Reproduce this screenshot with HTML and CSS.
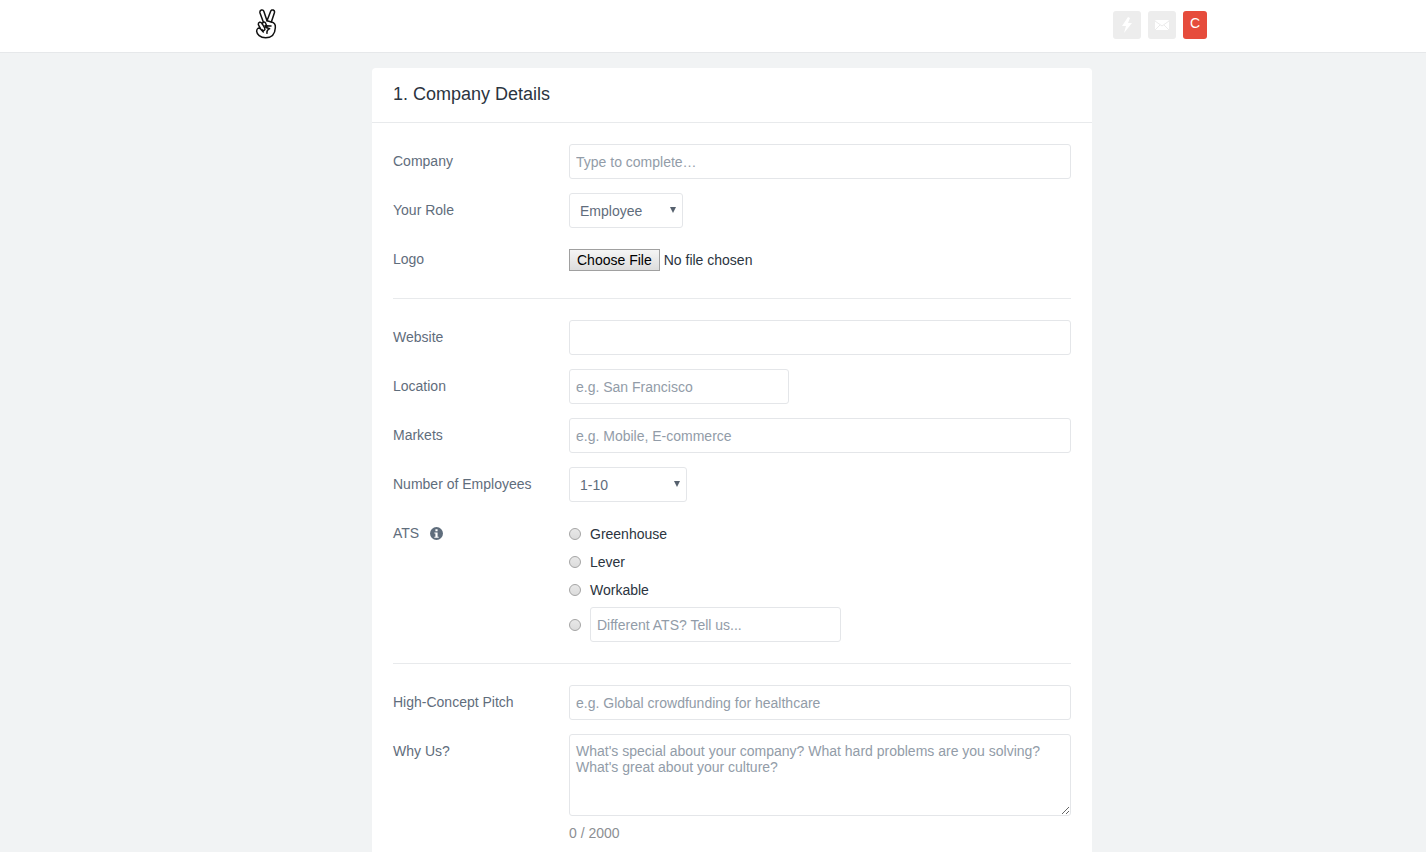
FILE: index.html
```html
<!DOCTYPE html>
<html lang="en">
<head>
<meta charset="utf-8">
<title>Company Details</title>
<link rel="stylesheet" href="styles.css">
</head>
<body>
<header class="topbar">
  <div class="topbar-inner">
    <a class="logo" href="#" aria-label="Home">
      <svg width="22" height="30" viewBox="28 22 66 90" fill="none" stroke="#111" stroke-width="4.5" stroke-linecap="round" stroke-linejoin="round">
        <path d="M53 61 43 34C41 25 52 21 55 30L64 57 75 29C78 21 89 25 86 34L77 61"/>
        <path d="M64 57 77 61C87 63 90 69 89 78C88 98 78 108 60 108C43 108 34 98 33 89C33 81 38 77 44 81L53 91"/>
        <path d="M44 80 38 69C37 61 45 59 49 65L57 79C60 86 53 89 49 84"/>
        <path d="M50 67C51 59 58 59 60 65L64 76"/>
        <path d="M76 73 58 72C58 79 67 79 72 81C66 84 63 90 64 95"/>
      </svg>
    </a>
    <nav class="actions">
      <button class="action" type="button" aria-label="Activity">
        <svg width="12" height="16" viewBox="0 0 12 16" fill="#fff"><path d="M7 0 1 9l4 0-2 7 8-10-4 0 2-5z"/></svg>
      </button>
      <button class="action" type="button" aria-label="Messages">
        <svg width="16" height="12" viewBox="0 0 16 12"><rect x="1" y="1" width="14" height="10" rx="1" fill="#fff"/><path d="M1 2l7 5 7-5M1 11l5-5M15 11l-5-5" fill="none" stroke="#ebebeb"/></svg>
      </button>
      <button class="action avatar" type="button">C</button>
    </nav>
  </div>
</header>
<main class="page">
  <form class="card">
    <h1 class="card-title">1. Company Details</h1>
    <div class="card-body">
      <section class="group">
        <div class="row">
          <label class="label" for="company">Company</label>
          <input class="control" id="company" type="text" placeholder="Type to complete…">
        </div>
        <div class="row">
          <label class="label" for="role">Your Role</label>
          <div class="select-wrap role-wrap"><select class="control select" id="role"><option>Employee</option></select></div>
        </div>
        <div class="row">
          <label class="label" for="logo">Logo</label>
          <input class="file" id="logo" type="file">
        </div>
      </section>
      <section class="group">
        <div class="row">
          <label class="label" for="website">Website</label>
          <input class="control" id="website" type="text">
        </div>
        <div class="row">
          <label class="label" for="location">Location</label>
          <input class="control control-short" id="location" type="text" placeholder="e.g. San Francisco">
        </div>
        <div class="row">
          <label class="label" for="markets">Markets</label>
          <input class="control" id="markets" type="text" placeholder="e.g. Mobile, E-commerce">
        </div>
        <div class="row">
          <label class="label" for="size">Number of Employees</label>
          <div class="select-wrap size-wrap"><select class="control select" id="size"><option>1-10</option></select></div>
        </div>
        <div class="row" role="radiogroup" aria-labelledby="ats-label">
          <div class="label ats-label"><span id="ats-label">ATS</span>
            <svg width="13" height="13" viewBox="0 0 12 12"><circle cx="6" cy="6" r="6" fill="#5f6d7c"/><path d="M5 2h2v2H5zM4 5h3v4h1v1H4V9h1V6H4z" fill="#fff"/></svg>
          </div>
          <div class="options">
            <label class="option"><input class="radio" type="radio" name="ats">Greenhouse</label>
            <label class="option"><input class="radio" type="radio" name="ats">Lever</label>
            <label class="option"><input class="radio" type="radio" name="ats">Workable</label>
            <div class="option option-other">
              <input class="radio" type="radio" name="ats" aria-label="Different ATS">
              <input class="control control-other" type="text" aria-label="Different ATS name" placeholder="Different ATS? Tell us...">
            </div>
          </div>
        </div>
      </section>
      <section class="group">
        <div class="row">
          <label class="label" for="pitch">High-Concept Pitch</label>
          <input class="control" id="pitch" type="text" placeholder="e.g. Global crowdfunding for healthcare">
        </div>
        <div class="row">
          <label class="label" for="why">Why Us?</label>
          <div>
            <textarea class="control textarea" id="why" placeholder="What's special about your company? What hard problems are you solving? What's great about your culture?"></textarea>
            <div class="counter">0 / 2000</div>
          </div>
        </div>
      </section>
    </div>
  </form>
</main>
</body>
</html>
```
FILE: styles.css
```css
* { box-sizing: border-box; }

body {
  display: flex;
  flex-direction: column;
  min-height: 100vh;
  margin: 0;
  background: #f1f3f4;
  color: #2b3440;
  font: 14px/16px "Liberation Sans", Arial, sans-serif;
}

button, input, select, textarea { font: inherit; }

.topbar {
  padding-left: 36px;
  background: #fff;
  border-bottom: 1px solid #e6e8ea;
}

.topbar-inner {
  display: flex;
  justify-content: space-between;
  align-items: flex-start;
  max-width: 952px;
  height: 52px;
  margin: 0 auto;
}

.logo { padding-top: 9px; }
.logo svg { display: block; }

.actions {
  display: flex;
  gap: 7px;
  padding-top: 11px;
}

.action {
  display: flex;
  align-items: center;
  justify-content: center;
  width: 28px;
  height: 28px;
  padding: 0;
  border: 0;
  border-radius: 3px;
  background: #ededed;
}

.avatar {
  width: 24px;
  padding-bottom: 4px;
  background: #e64c3c;
  color: #fff;
}

.page {
  display: flex;
  flex: 1;
  justify-content: center;
  padding: 15px 0 0 38px;
}

.card {
  width: 100%;
  max-width: 720px;
  background: #fff;
  border-radius: 4px 4px 0 0;
}

.card-title {
  margin: 0;
  padding: 16px 21px 18px;
  border-bottom: 1px solid #e8eaec;
  font-size: 18px;
  line-height: 20px;
  font-weight: 400;
}

.card-body { padding: 0 21px; }

.group {
  display: grid;
  gap: 14px;
  padding: 21px 0;
}

.group + .group { border-top: 1px solid #e8eaec; }
.group:last-child { padding-bottom: 8px; }

.row {
  display: grid;
  grid-template-columns: 176px 1fr;
  align-items: start;
}

.label {
  color: #5f6d7c;
  line-height: 34px;
}

.ats-label {
  display: flex;
  align-items: center;
  gap: 11px;
}

.control {
  display: block;
  width: 100%;
  height: 35px;
  margin: 0;
  padding: 1px 6px 0;
  border: 1px solid #e4e6e9;
  border-radius: 3px;
  background: #fff;
  color: #5f6d7c;
}

.control::placeholder { color: #929ca8; opacity: 1; }
.control-short { width: 220px; }
.control-other { width: 251px; }

.select-wrap { position: relative; }
.role-wrap { width: 114px; }
.size-wrap { width: 118px; }

.select {
  padding-left: 10px;
  appearance: none;
}

.select-wrap::after {
  content: "";
  position: absolute;
  top: 14px;
  right: 7px;
  width: 6px;
  height: 6px;
  background: #56616e;
  clip-path: polygon(0 0, 100% 0, 50% 100%);
  pointer-events: none;
}

.file {
  width: 100%;
  height: 35px;
  padding-top: 7px;
}

.file::file-selector-button {
  height: 22px;
  margin: 0 4px 0 0;
  padding: 0 7px;
  border: 1px solid #a0a0a0;
  border-radius: 0;
  background: linear-gradient(#f5f5f5, #dddddd);
  color: #000;
  font: inherit;
}

.options { padding-top: 4px; }

.option {
  display: flex;
  align-items: center;
  gap: 9px;
  line-height: 28px;
}

.option-other { padding-top: 3px; }

.radio {
  width: 12px;
  height: 12px;
  margin: 0;
  border: 1px solid #a4a4a4;
  border-radius: 50%;
  background: linear-gradient(#e8e8e8, #dcdcdc);
  appearance: none;
}

.radio:checked { background: radial-gradient(#555 35%, #e4e4e4 40%); }

.textarea {
  height: 82px;
  padding: 8px 6px;
  resize: vertical;
}

.counter {
  padding-top: 9px;
  color: #8c8f93;
}
```
